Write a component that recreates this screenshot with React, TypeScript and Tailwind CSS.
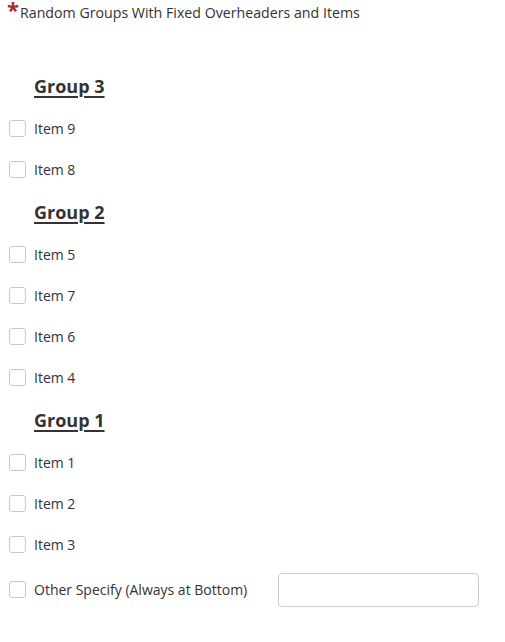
const groups = [
  { name: "Group 3", items: ["Item 9", "Item 8"] },
  { name: "Group 2", items: ["Item 5", "Item 7", "Item 6", "Item 4"] },
  { name: "Group 1", items: ["Item 1", "Item 2", "Item 3"] },
]

function Box() {
  return <span className="w-[17px] h-[17px] rounded-[3px] border border-[#c8c8c8] bg-white flex-shrink-0" />
}

export default function App() {
  return (
    <div
      className="w-[505px] h-[642px] bg-white text-[#333333] text-[14px]"
      style={{ fontFamily: '"Open Sans", "Noto Sans", sans-serif' }}
    >
      {/* Question title */}
      <div className="h-[64px] pl-[7px] pt-[2px]">
        <div className="flex items-start">
          <span className="text-[#a0302a] text-[22px] font-bold leading-[14px]">*</span>
          <span className="text-[14.2px] leading-[22px] ml-[1px]">
            Random Groups With Fixed Overheaders and Items
          </span>
        </div>
      </div>

      {groups.map((g) => (
        <div key={g.name}>
          <div className="h-[44px] flex items-center pl-[34px]">
            <span className="text-[18px] font-bold underline underline-offset-[3px] decoration-[1.5px]">
              {g.name}
            </span>
          </div>
          {g.items.map((item) => (
            <label key={item} className="h-[41px] flex items-center pl-[9px] gap-[8px]">
              <Box />
              <span>{item}</span>
            </label>
          ))}
        </div>
      ))}

      {/* Other specify */}
      <div className="mt-[4px] h-[41px] flex items-center pl-[9px]">
        <Box />
        <span className="ml-[8px] w-[244px]">Other Specify (Always at Bottom)</span>
        <input
          type="text"
          className="w-[201px] h-[34px] border border-[#cccccc] rounded-[4px] bg-white outline-none"
        />
      </div>
    </div>
  )
}
